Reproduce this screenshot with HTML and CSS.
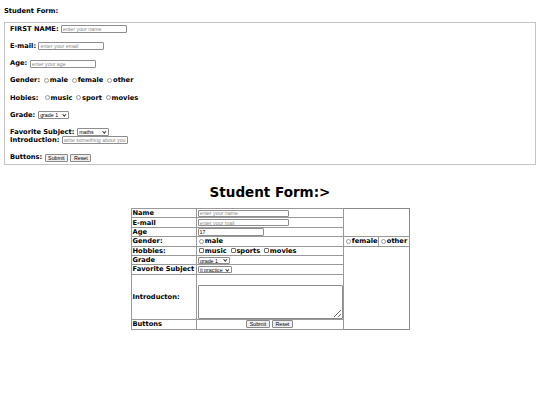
FILE: index.html
```html
<!DOCTYPE html>
<html lang="en">
<head>
<meta charset="utf-8">
<title>Student Form</title>
<link rel="stylesheet" href="styles.css">
</head>
<body>
<div class="page">
  <p class="title">Student Form:</p>
  <form class="form-one">
    <fieldset class="box">
      <label>FIRST NAME:</label> <input class="field" type="text" placeholder="enter your name"><br><br>
      <label>E-mail:</label> <input class="field" type="email" placeholder="enter your email"><br><br>
      <label>Age:</label> <input class="field" type="text" placeholder="enter your age"><br><br>
      Gender: <input class="radio" type="radio" name="g1">male <input class="radio" type="radio" name="g1">female <input class="radio" type="radio" name="g1">other<br><br>
      Hobies: &nbsp;<input class="radio" type="radio" name="h1">music <input class="radio" type="radio" name="h2">sport <input class="radio" type="radio" name="h3">movies<br><br>
      Grade: <span class="sel"><select class="pick"><option>grade 1</option></select></span><br><br>
      Favorite Subject: <span class="sel"><select class="pick pick-maths"><option>maths</option></select></span><br>
      Introduction: <input class="field" type="text" placeholder="write something about you"><br><br>
      Buttons: <input class="btn" type="submit" value="Submit"> <input class="btn" type="reset" value="Reset">
    </fieldset>
  </form>

  <h1 class="heading">Student Form:&gt;</h1>
  <form class="form-two">
    <table class="grid">
      <colgroup>
        <col class="c1"><col class="c2"><col class="c3"><col class="c4">
      </colgroup>
      <tr><td>Name</td><td><input class="field wide" type="text" placeholder="enter your name"></td></tr>
      <tr><td>E-mail</td><td><input class="field wide" type="email" placeholder="enter your mail"></td></tr>
      <tr><td>Age</td><td><input class="field" type="text" value="17"></td></tr>
      <tr><td>Gender:</td><td><input class="radio" type="radio" name="g2">male</td><td><input class="radio" type="radio" name="g2">female</td><td><input class="radio" type="radio" name="g2">other</td></tr>
      <tr><td>Hobbies:</td><td><input class="check" type="checkbox">music <input class="check" type="checkbox">sports <input class="check" type="checkbox">movies</td></tr>
      <tr><td>Grade</td><td><span class="sel"><select class="pick pick-grade"><option>grade 1</option></select></span></td></tr>
      <tr><td>Favorite Subject</td><td><span class="sel"><select class="pick pick-it"><option>it practice</option></select></span></td></tr>
      <tr class="intro-row"><td>Introducton:</td><td class="intro-cell"><textarea class="intro"></textarea></td></tr>
      <tr class="btn-row"><td>Buttons</td><td class="center"><input class="btn" type="submit" value="Submit"> <input class="btn" type="reset" value="Reset"></td></tr>
    </table>
  </form>
</div>
</body>
</html>
```

FILE: styles.css
```css
html, body {
  margin: 0;
  padding: 0;
  background: #fff;
}

body {
  font-family: "DejaVu Sans", Verdana, sans-serif;
  font-weight: bold;
  font-size: 6.7px;
  color: #000;
}

.page {
  padding: 0 4px;
}

.title {
  margin: 0 0 7px;
  padding-top: 7px;
  line-height: 8px;
}

.form-one,
.form-two {
  margin: 0;
}

.box {
  margin: 0;
  border: 1px solid #c4c4c4;
  padding: 2.2px 5px 2px;
  line-height: 8.55px;
  min-inline-size: 0;
}

input,
select,
textarea {
  font-family: "Liberation Sans", Arial, sans-serif;
  font-size: 5.3px;
  font-weight: normal;
  color: #000;
  margin: 0;
}

.field {
  appearance: none;
  box-sizing: border-box;
  width: 66px;
  height: 8px;
  padding: 0 1px;
  line-height: 6px;
  border: 1px solid #8d8d8d;
  border-radius: 1px;
  background: #fff;
  vertical-align: middle;
}

.field::placeholder {
  color: #8a8a8a;
}

.wide {
  width: 91px;
  height: 7.5px;
}

.radio {
  appearance: none;
  box-sizing: border-box;
  width: 5px;
  height: 5px;
  margin: 0 0.8px 0 1.5px;
  border: 0.8px solid #9a9a9a;
  border-radius: 50%;
  background: #fff;
  vertical-align: -0.6px;
}

.check {
  appearance: none;
  box-sizing: border-box;
  width: 5px;
  height: 5px;
  margin: 0 0.8px 0 1.5px;
  border: 0.8px solid #6f6f6f;
  border-radius: 1px;
  background: #fff;
  vertical-align: -0.6px;
}

.sel {
  position: relative;
  display: inline-block;
  vertical-align: middle;
  line-height: 0;
}

.sel::after {
  content: "";
  position: absolute;
  right: 3.2px;
  top: 1.9px;
  width: 1.6px;
  height: 1.6px;
  border-right: 0.8px solid #333;
  border-bottom: 0.8px solid #333;
  transform: rotate(45deg);
  pointer-events: none;
}

.pick {
  appearance: none;
  display: block;
  box-sizing: border-box;
  width: 31px;
  height: 8px;
  padding: 0 0 0 1.5px;
  line-height: 6px;
  border: 1px solid #8d8d8d;
  border-radius: 1px;
  background: #fff;
}

.pick-maths {
  width: 32px;
}

.pick-grade {
  width: 32px;
  height: 7.5px;
}

.pick-it {
  width: 34px;
  height: 7.5px;
}

.btn {
  appearance: none;
  box-sizing: border-box;
  height: 8px;
  padding: 0 2.5px;
  line-height: 6px;
  border: 1px solid #8a8a8a;
  border-radius: 1px;
  background: #efefef;
  vertical-align: middle;
}

.heading {
  margin: 19px 0 8px;
  text-align: center;
  font-size: 13.5px;
  line-height: 16px;
}

.grid {
  margin: 0 auto;
  width: 278px;
  table-layout: fixed;
  border-collapse: collapse;
  border: 1px solid #8a8a8a;
}

.c1 { width: 65px; }
.c2 { width: 147px; }
.c3 { width: 35px; }
.c4 { width: 31px; }

.grid td {
  height: 8.4px;
  padding: 0 1px;
  line-height: 8px;
  border: 1px solid #999;
  white-space: nowrap;
  overflow: hidden;
}

.intro-row td {
  height: 44px;
}

.intro-cell {
  vertical-align: bottom;
  padding-bottom: 1.5px;
}

.intro {
  display: block;
  box-sizing: border-box;
  width: 145px;
  height: 34px;
  border: 1px solid #8d8d8d;
  border-radius: 1px;
  background: #fff;
}

.btn-row td {
  height: 9px;
}

.center {
  text-align: center;
}
```
